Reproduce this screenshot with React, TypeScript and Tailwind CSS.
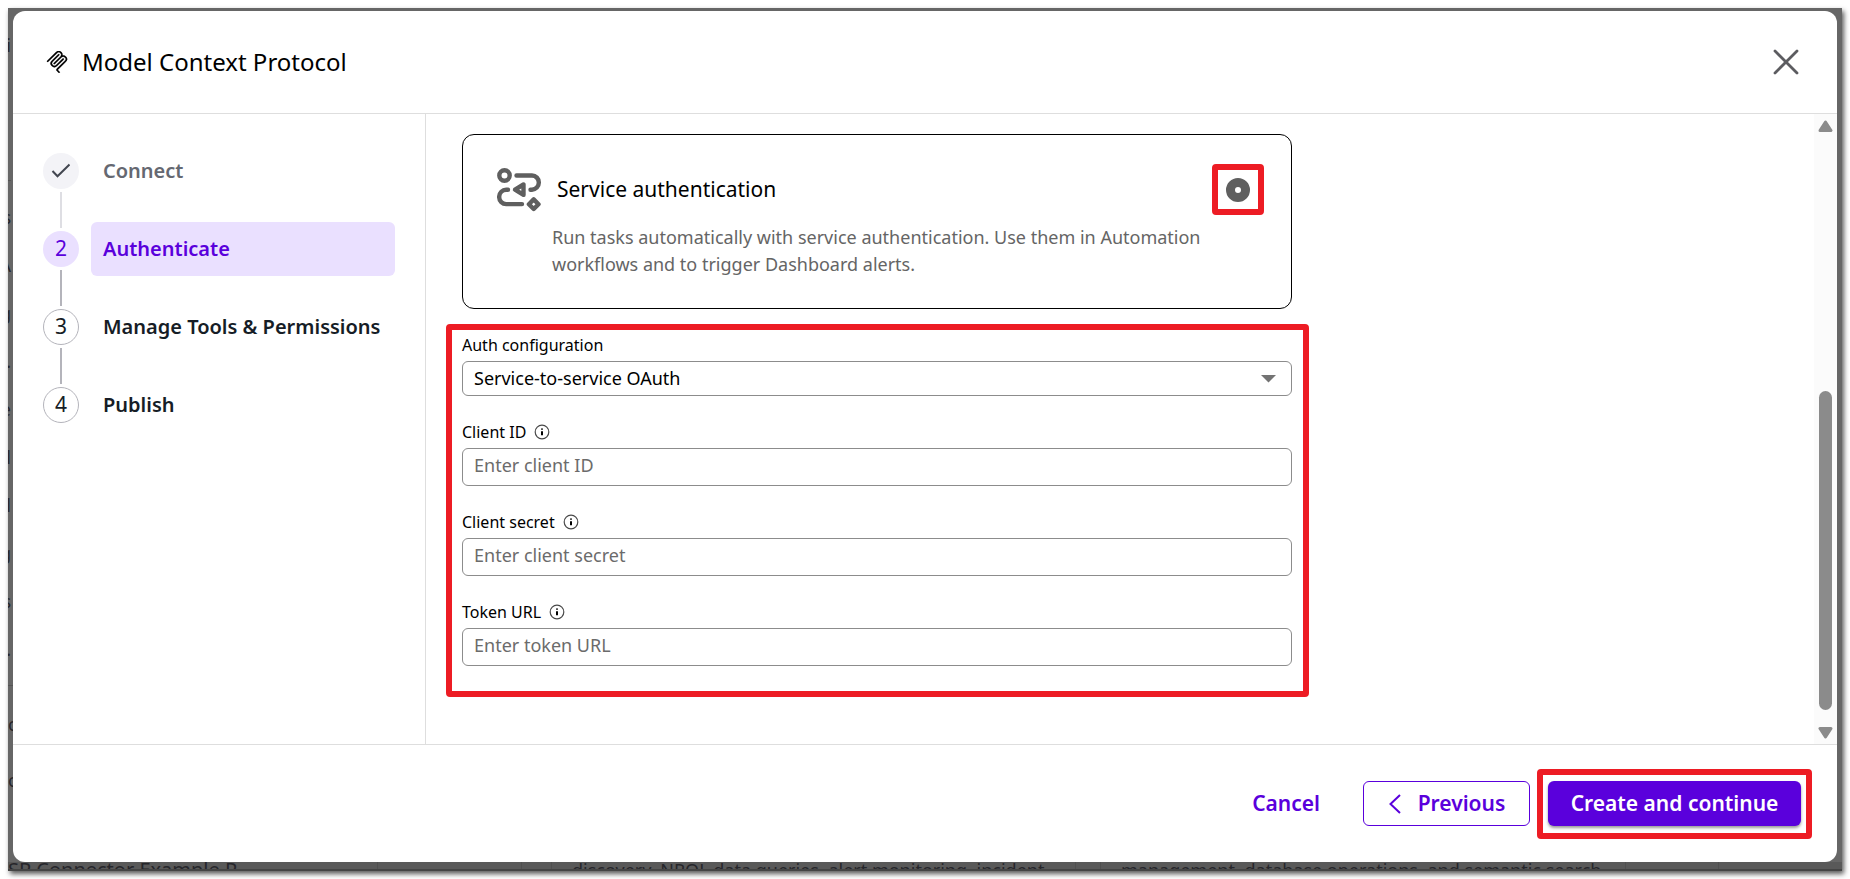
import { useState } from 'react';
import type { ReactNode } from 'react';

type Step = {
  label: string;
  state: 'done' | 'current' | 'todo';
};

const steps: Step[] = [
  { label: 'Connect', state: 'done' },
  { label: 'Authenticate', state: 'current' },
  { label: 'Manage Tools & Permissions', state: 'todo' },
  { label: 'Publish', state: 'todo' },
];

const fields = [
  { id: 'client-id', label: 'Client ID', placeholder: 'Enter client ID' },
  { id: 'client-secret', label: 'Client secret', placeholder: 'Enter client secret' },
  { id: 'token-url', label: 'Token URL', placeholder: 'Enter token URL' },
];

// clipped edge of the page behind the dialog
const navEdge = ['s', 'A', 'g', '.', 'e', 'l', 'l', 'g', 's', '.'];

function McpIcon() {
  return (
    <svg width="22" height="22" viewBox="0 0 24 24" fill="currentColor" stroke="currentColor" strokeWidth="0.2" aria-hidden="true">
      <path d="M15.688 2.343a2.588 2.588 0 00-3.61 0l-9.626 9.44a.863.863 0 01-1.203 0 .823.823 0 010-1.18l9.626-9.44a4.313 4.313 0 016.016 0 4.116 4.116 0 011.204 3.54 4.3 4.3 0 013.609 1.18l.05.05a4.115 4.115 0 010 5.9l-8.706 8.537a.274.274 0 000 .393l1.788 1.754a.823.823 0 010 1.18.863.863 0 01-1.203 0l-1.788-1.753a1.92 1.92 0 010-2.754l8.706-8.538a2.47 2.47 0 000-3.54l-.05-.049a2.588 2.588 0 00-3.607-.003l-7.172 7.034-.002.002-.098.097a.863.863 0 01-1.204 0 .823.823 0 010-1.18l7.273-7.133a2.47 2.47 0 00-.003-3.537z" />
      <path d="M14.485 4.703a.823.823 0 000-1.18.863.863 0 00-1.204 0l-7.119 6.982a4.115 4.115 0 000 5.9 4.314 4.314 0 006.016 0l7.12-6.982a.823.823 0 000-1.18.863.863 0 00-1.204 0l-7.119 6.982a2.588 2.588 0 01-3.61 0 2.47 2.47 0 010-3.54l7.12-6.982z" />
    </svg>
  );
}

function FlowIcon() {
  return (
    <svg
      width="44"
      height="44"
      viewBox="0 0 44 44"
      fill="none"
      stroke="#5f5f5f"
      strokeWidth="4.4"
      strokeLinecap="round"
      strokeLinejoin="round"
      aria-hidden="true"
    >
      <circle cx="7.5" cy="7.5" r="5.2" />
      <path d="M19.5 7.5H35a6.800 7 0 0 1 6.800 7.2a7 7 0 0 1-6.800 7h-1.5" />
      <path d="M11 21.7H9.500a7 7 0 0 0-7.300 7.200a7 7 0 0 0 7.300 7.200H25" />
      <path d="M18 21.700l8.500-5.200v10.400z" />
      <path d="M36.700 31.400l4.800 4.800-4.800 4.800-4.800-4.800z" />
    </svg>
  );
}

function InfoIcon() {
  return (
    <svg width="16" height="16" viewBox="0 0 16 16" fill="none" aria-hidden="true">
      <circle cx="8" cy="8" r="6.800" stroke="#4a4a4a" strokeWidth="1.200" />
      <path d="M8 7.200v4" stroke="#000" strokeWidth="2" />
      <path d="M8 4.300v1.600" stroke="#555" strokeWidth="2" />
    </svg>
  );
}

function StepItem({ step, number, last }: { step: Step; number: number; last: boolean }) {
  const circle = {
    done: 'bg-[#f3f3f7]',
    current: 'bg-[#eae0ff] text-[#5a00dc]',
    todo: 'border border-[#b4b4bb] text-[#161d26]',
  }[step.state];
  const label = {
    done: 'text-[#656871]',
    current: 'bg-[#eae0ff] text-[#5a00dc]',
    todo: 'text-[#161d26]',
  }[step.state];

  return (
    <li className="flex h-[78px] items-start gap-3">
      <div className="flex w-9 shrink-0 flex-col items-center gap-[3px] pt-[9px]">
        <span className={`flex size-9 shrink-0 items-center justify-center rounded-full text-[21px] ${circle}`}>
          {step.state === 'done' ? (
            <svg width="20" height="16" viewBox="0 0 20 16" fill="none" stroke="#424650" strokeWidth="2" aria-label="Done">
              <path d="M1.500 8l5 5.300L18.500 1.500" />
            </svg>
          ) : (
            number
          )}
        </span>
        {!last && (
          <span className={`h-9 w-0.5 shrink-0 ${step.state === 'done' ? 'bg-[#dedee3]' : 'bg-[#b4b4bb]'}`} />
        )}
      </div>
      <a
        href="#"
        aria-current={step.state === 'current' ? 'step' : undefined}
        className={`flex h-[54px] flex-1 items-center rounded-md px-3 text-xl font-semibold whitespace-nowrap ${label}`}
      >
        {step.label}
      </a>
    </li>
  );
}

function Field({ id, label, info, children }: { id: string; label: string; info?: boolean; children: ReactNode }) {
  return (
    <div>
      <div className="mb-1.5 flex h-5 items-center gap-2">
        <label htmlFor={id} className="text-base leading-5 text-black">{label}</label>
        {info && <InfoIcon />}
      </div>
      {children}
    </div>
  );
}

export default function App() {
  const [values, setValues] = useState<Record<string, string>>({});

  return (
    <div className="flex min-h-screen bg-white p-2 font-['Noto_Sans',sans-serif]">
      <div className="flex min-w-0 flex-1 flex-col overflow-hidden bg-[#666666] pt-[3px] shadow-[2px_3px_5px_rgba(0,0,0,0.65)]">
        <div className="flex flex-1">
          {/* Page behind, left edge */}
          <div aria-hidden="true" className="flex w-[5px] shrink-0 flex-col overflow-hidden text-lg text-[#26262b]">
            <div className="flex h-[169px] w-[3px] flex-col items-end pt-5">i</div>
            <div className="flex h-[505px] w-[3px] flex-col border-t border-[#555] pt-3">
              {navEdge.map((c, i) => (
                <span key={i} className="flex h-12 items-center justify-end">{c}</span>
              ))}
            </div>
            <div className="flex flex-1 flex-col gap-7 border-t border-[#555] pt-6">
              <span>c</span>
              <span>c</span>
            </div>
          </div>

          <section
            role="dialog"
            aria-label="Model Context Protocol"
            className="flex min-w-0 flex-1 flex-col overflow-hidden rounded-xl bg-white"
          >
            <header className="flex h-[103px] items-center justify-between border-b border-[#dedede] pr-[38px] pl-[33px]">
              <div className="flex items-center gap-3.5">
                <McpIcon />
                <h1 className="text-2xl text-black">Model Context Protocol</h1>
              </div>
              <button type="button" aria-label="Close" className="cursor-pointer">
                <svg width="26" height="26" viewBox="0 0 26 26" stroke="#5c5c60" strokeWidth="2.800" strokeLinecap="round">
                  <path d="M2 2l22 22M24 2L2 24" />
                </svg>
              </button>
            </header>

            <div className="flex flex-1">
              <nav aria-label="Steps" className="w-[413px] shrink-0 border-r border-[#dedede] pt-[30px] pr-[30px] pl-[30px]">
                <ol>
                  {steps.map((step, i) => (
                    <StepItem key={step.label} step={step} number={i + 1} last={i === steps.length - 1} />
                  ))}
                </ol>
              </nav>

              <main className="min-w-0 flex-1 pt-5 pl-5">
                <div className="ml-4 w-[830px] rounded-xl border border-black pt-[29px] pr-[27px] pb-[30px] pl-[34px]">
                  <div className="flex h-[51px] items-center">
                    <FlowIcon />
                    <label htmlFor="service-auth" className="ml-4 flex-1 text-[21px] text-black">
                      Service authentication
                    </label>
                    <div className="flex h-full w-[52px] items-center justify-center rounded-sm border-6 border-[#ed1c24]">
                      <input
                        id="service-auth"
                        type="radio"
                        name="auth"
                        defaultChecked
                        className="size-6 shrink-0 appearance-none rounded-full border-9 border-[#5f5f5f] bg-white"
                      />
                    </div>
                  </div>
                  <p className="mt-[9px] ml-[55px] w-[690px] text-lg leading-[27px] text-[#656565]">
                    Run tasks automatically with service authentication. Use them in Automation
                    <br />
                    workflows and to trigger Dashboard alerts.
                  </p>
                </div>

                <form className="mt-[15px] flex w-[863px] flex-col gap-[26px] rounded-sm border-6 border-[#ed1c24] pt-[5px] pr-[11px] pb-[25px] pl-2.5">
                  <Field id="auth-config" label="Auth configuration">
                    <div className="relative">
                      <select
                        id="auth-config"
                        className="block h-[35px] w-full appearance-none rounded-md border border-[#8c8c8c] bg-white px-[11px] pb-0.5 text-lg leading-6 text-black"
                      >
                        <option>Service-to-service OAuth</option>
                      </select>
                      <svg
                        width="15"
                        height="8"
                        viewBox="0 0 15 8"
                        fill="#737373"
                        className="pointer-events-none absolute top-3.5 right-4"
                        aria-hidden="true"
                      >
                        <path d="M0 0h15L7.500 7.500z" />
                      </svg>
                    </div>
                  </Field>
                  {fields.map(f => (
                    <Field key={f.id} id={f.id} label={f.label} info>
                      <input
                        id={f.id}
                        type="text"
                        placeholder={f.placeholder}
                        value={values[f.id] ?? ''}
                        onChange={e => setValues({ ...values, [f.id]: e.target.value })}
                        className="block h-[38px] w-full rounded-md border border-[#8c8c8c] bg-white px-[11px] pb-1 text-lg text-black placeholder:text-[#6b6b6b]"
                      />
                    </Field>
                  ))}
                </form>
              </main>

              {/* Scrollbar */}
              <div aria-hidden="true" className="flex w-[23px] shrink-0 flex-col items-center bg-[#fbfbfb] pt-1.5 pb-[5px]">
                <svg width="15" height="12" viewBox="0 0 15 12" fill="#8b8b8b" stroke="#8b8b8b" strokeWidth="3" strokeLinejoin="round">
                  <path d="M7.500 2l5.500 8.500H2z" />
                </svg>
                <div className="mt-auto mb-[17px] h-[319px] w-[13px] rounded-full bg-[#8b8b8b]" />
                <svg width="15" height="12" viewBox="0 0 15 12" fill="#8b8b8b" stroke="#8b8b8b" strokeWidth="3" strokeLinejoin="round">
                  <path d="M7.500 10L2 1.500h11z" />
                </svg>
              </div>
            </div>

            <footer className="flex items-start justify-end border-t border-[#dedede] pt-6 pr-[25px] pb-[23px] text-[21px] font-semibold">
              <button type="button" className="mt-3 mr-[43px] h-[45px] cursor-pointer text-[#5a00dc]">Cancel</button>
              <button
                type="button"
                className="mt-3 mr-[7px] flex h-[45px] w-[167px] cursor-pointer items-center justify-center gap-4 rounded-md border border-[#5a00dc] text-[#5a00dc]"
              >
                <svg width="14" height="20" viewBox="0 0 14 20" fill="none" stroke="currentColor" strokeWidth="2" aria-hidden="true">
                  <path d="M12 1L2.500 10l9.500 9" />
                </svg>
                Previous
              </button>
              <div className="rounded-sm border-6 border-[#ed1c24] px-[5px] pt-1.5 pb-[7px]">
                <button
                  type="button"
                  className="block h-[45px] w-[253px] cursor-pointer rounded-md bg-[#5a00dc] text-white shadow-[0_2px_3px_rgba(0,0,0,0.4)]"
                >
                  Create and continue
                </button>
              </div>
            </footer>
          </section>
          <div className="w-[5px] shrink-0" />
        </div>

        {/* Page behind, bottom edge */}
        <div aria-hidden="true" className="flex h-[9px] overflow-hidden border-b-2 border-[#444] bg-[#595959] text-lg leading-4 whitespace-nowrap text-[#26262b]">
          <div className="w-[370px] shrink-0 border-r border-[#505050] text-xl leading-4">SP Connector Example P</div>
          <div className="w-[144px] shrink-0 border-r border-[#505050]" />
          <div className="w-[30px] shrink-0 border-r border-[#505050]" />
          <div className="w-[524px] shrink-0 border-r border-[#505050] pl-5">discovery, NRQL data queries, alert monitoring, incident</div>
          <div className="w-[25px] shrink-0 border-r border-[#505050]" />
          <div className="w-[525px] shrink-0 border-r border-[#505050] pl-5">management, database operations, and semantic search</div>
          <div className="w-[93px] shrink-0 border-r border-[#505050]" />
        </div>
      </div>
    </div>
  );
}
